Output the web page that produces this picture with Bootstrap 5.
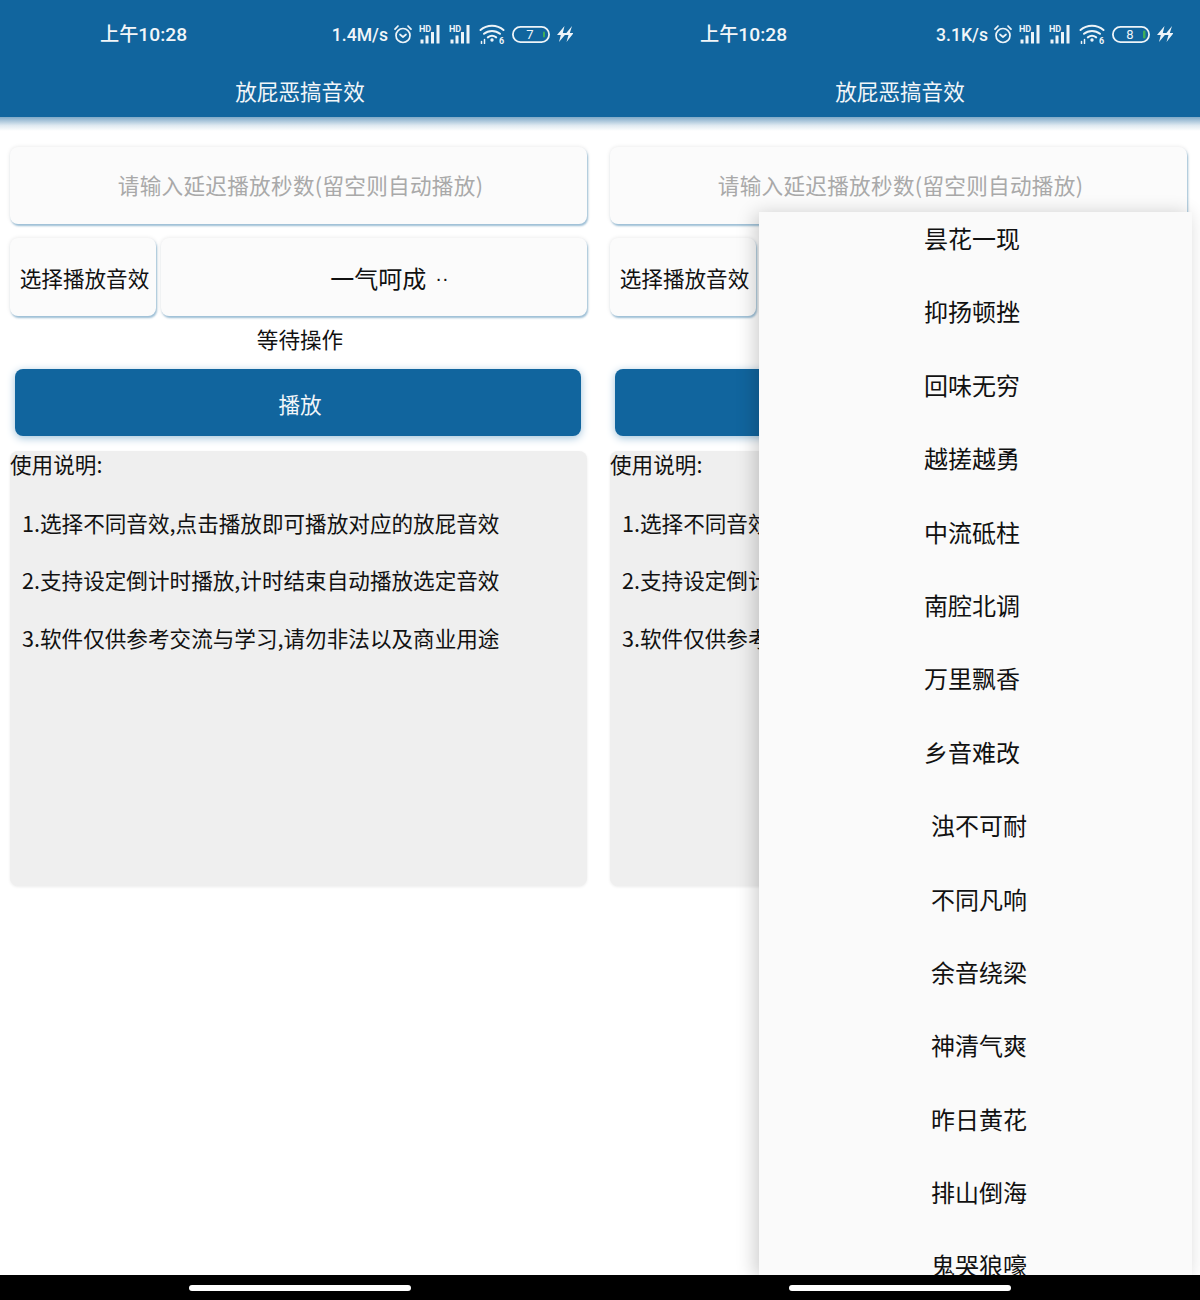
<!DOCTYPE html>
<html lang="zh-CN">
<head>
<meta charset="utf-8">
<title>放屁恶搞音效</title>
<link href="https://cdn.jsdelivr.net/npm/bootstrap@5.3.0/dist/css/bootstrap.min.css" rel="stylesheet">
<style>
html,body{margin:0;height:1300px;overflow:hidden;background:#fff}
body{font-family:"Noto Sans CJK SC","Liberation Sans",sans-serif;color:#111}
.screen{width:600px;height:1300px;position:relative;overflow:hidden;flex:none}
.app-head{height:117px;background:#11659e;color:#f2f6f9}
.status-row{height:28px;margin-top:20px;padding:0 27px 0 100px}
.clock{font:500 19.2px/30px Roboto,"Noto Sans CJK SC",sans-serif;padding-top:2px}
.speed{font:500 17.6px/30px Roboto,sans-serif;margin-right:-1px;padding-top:1px}
.tray{gap:7px}
.tray svg{display:block;flex:none}
.app-title{font-size:21.6px;line-height:30px;margin-top:28px;text-align:center}
.head-fade{height:14px;background:linear-gradient(#7fa9c8,#dfe9f1 60%,#fff)}
.body-pad{padding:0 13px 0 10px}
.delay-input.form-control{display:block;height:77px;margin-top:16px;width:577px;border:0;border-radius:8px;background:#fbfbfb;box-shadow:1px 2px 2px #9dbfd6,0 0 4px #e6e6e6;text-align:center;font-size:21.6px;letter-spacing:.3px;color:#333;padding:0 0 2px 4px}
.delay-input::placeholder{color:#a9a9a9;opacity:1}
.pick-row{margin-top:14px;height:78px;gap:5px}
.pick-box{background:#fbfbfb;border-radius:8px;box-shadow:1px 2px 2px #9dbfd6,0 0 4px #e6e6e6;font-size:21.6px;color:#111;height:78px}
.pick-label{width:146px;justify-content:center;padding:2px 0 0 3px}
.pick-value{width:426px;justify-content:center;font-size:24px;padding:2px 0 0 31px}
.more-dots{font:20px/1 "Liberation Sans",sans-serif;margin-left:9px}
.wait-text{font-size:21.6px;line-height:30px;text-align:center;margin-top:8px;padding-left:3px}
.play-btn.btn{display:block;width:566px;height:67px;margin:15px 0 0 5px;padding:4px 0 0 4px;background:#11659e;border:0;border-radius:8px;color:#f2f6f9;font-size:21.6px;box-shadow:0 2px 8px #9fc2da}
.help-box{height:435px;margin-top:15px;width:577px;background:#efefef;border-radius:8px;box-shadow:0 1px 3px #ececec;font-size:21.6px;line-height:30px;color:#111}
.help-head{line-height:26px;padding-bottom:3px}
.help-line{padding-left:12px;margin-top:27.6px}
.sound-menu{position:absolute;left:159px;top:212px;width:433px;height:1063px;background:#fafafa;box-shadow:-4px 2px 18px rgba(0,0,0,.2);overflow:hidden}
.sound-list{margin:-11px 0 0;padding:0 7px 0 0}
.sound-item{height:73.4px;line-height:73.4px;text-align:center;font-size:24px;color:#111;list-style:none}
.sound-item.shifted{padding-left:14px}
.nav-strip{position:absolute;left:0;right:0;bottom:0;height:25px;background:#000}
.nav-pill{width:222px;height:6px;border-radius:3px;background:#fff;margin:10px auto 0}
</style>
</head>
<body>
<svg width="0" height="0" style="position:absolute">
<defs>
<symbol id="i-alarm" viewBox="0 0 18 20"><g fill="none" stroke="#eef4f8" stroke-width="1.700" stroke-linecap="round" stroke-linejoin="round"><circle cx="9" cy="11.500" r="7"/><path d="M6 10.500l3 2.500 3-2.500"/><path d="M1 5.200L4 2M17 5.200L14 2"/></g></symbol>
<symbol id="i-signal" viewBox="0 0 23 20"><text x="0" y="7.500" font-family="Roboto,sans-serif" font-size="9" font-weight="700" fill="#eef4f8">HD</text><g fill="#eef4f8"><rect x="1.500" y="15.500" width="3" height="4"/><rect x="6.500" y="11.500" width="3" height="8"/><rect x="12" y="8" width="3" height="11.500"/><rect x="17.500" y="1" width="3" height="18.500"/></g></symbol>
<symbol id="i-wifi" viewBox="0 0 26 20"><g fill="none" stroke="#eef4f8" stroke-width="2" stroke-linecap="round"><path d="M1.500 6C8 .3 18 .3 24.500 6"/><path d="M5 9.800c4.500-3.800 11.500-3.800 16 0"/><path d="M8.800 13.400c2.500-1.900 5.900-1.900 8.400 0"/></g><circle cx="13" cy="16" r="1.700" fill="#eef4f8"/><path d="M2.500 19.500v-2M5.500 19.500v-4" stroke="#eef4f8" stroke-width="1.500" stroke-linecap="round"/><text x="20" y="20" font-family="Roboto,sans-serif" font-size="9" font-weight="700" fill="#eef4f8">6</text></symbol>
<symbol id="i-bolt" viewBox="0 0 16 16"><path d="M7.500 0L0 9h3.800L2 16l7.500-9H5.800zM15 0L7.800 9h3.700L9.500 16 16.500 7h-3.700z" fill="#eef4f8"/></symbol>
</defs>
</svg>
<main class="d-flex">

<section class="screen">
  <header class="app-head d-flex flex-column">
    <div class="status-row d-flex justify-content-between align-items-center">
      <span class="clock">上午10:28</span>
      <div class="tray d-flex align-items-center">
        <span class="speed">1.4M/s</span>
        <svg width="18" height="20"><use href="#i-alarm"/></svg>
        <svg width="23" height="20"><use href="#i-signal"/></svg>
        <svg width="23" height="20"><use href="#i-signal"/></svg>
        <svg width="26" height="20"><use href="#i-wifi"/></svg>
        <svg width="38" height="17" viewBox="0 0 38 17"><rect x=".9" y=".9" width="36.200" height="15.200" rx="7.600" fill="none" stroke="#eef4f8" stroke-width="1.800"/><rect x="31" y="5.500" width="2" height="6" rx="1" fill="#3fae5a"/><text x="18" y="13" text-anchor="middle" font-family="Roboto,sans-serif" font-size="13" fill="#eef4f8">7</text></svg>
        <svg width="16" height="16"><use href="#i-bolt"/></svg>
      </div>
    </div>
    <div class="app-title">放屁恶搞音效</div>
  </header>
  <div class="head-fade"></div>
  <div class="body-pad">
    <input class="delay-input form-control" type="text" placeholder="请输入延迟播放秒数(留空则自动播放)">
    <div class="pick-row d-flex">
      <div class="pick-box pick-label d-flex align-items-center">选择播放音效</div>
      <div class="pick-box pick-value d-flex align-items-center">一气呵成<span class="more-dots">··</span></div>
    </div>
    <div class="wait-text">等待操作</div>
    <button class="play-btn btn" type="button">播放</button>
    <div class="help-box">
      <div class="help-head">使用说明:</div>
      <div class="help-line">1.选择不同音效,点击播放即可播放对应的放屁音效</div>
      <div class="help-line">2.支持设定倒计时播放,计时结束自动播放选定音效</div>
      <div class="help-line">3.软件仅供参考交流与学习,请勿非法以及商业用途</div>
    </div>
  </div>
  <div class="nav-strip"><div class="nav-pill"></div></div>
</section>

<section class="screen">
  <header class="app-head d-flex flex-column">
    <div class="status-row d-flex justify-content-between align-items-center">
      <span class="clock">上午10:28</span>
      <div class="tray d-flex align-items-center">
        <span class="speed">3.1K/s</span>
        <svg width="18" height="20"><use href="#i-alarm"/></svg>
        <svg width="23" height="20"><use href="#i-signal"/></svg>
        <svg width="23" height="20"><use href="#i-signal"/></svg>
        <svg width="26" height="20"><use href="#i-wifi"/></svg>
        <svg width="38" height="17" viewBox="0 0 38 17"><rect x=".9" y=".9" width="36.200" height="15.200" rx="7.600" fill="none" stroke="#eef4f8" stroke-width="1.800"/><rect x="31" y="4.500" width="2.500" height="8" rx="1" fill="#3fae5a"/><text x="18" y="13" text-anchor="middle" font-family="Roboto,sans-serif" font-size="13" fill="#eef4f8">8</text></svg>
        <svg width="16" height="16"><use href="#i-bolt"/></svg>
      </div>
    </div>
    <div class="app-title">放屁恶搞音效</div>
  </header>
  <div class="head-fade"></div>
  <div class="body-pad">
    <input class="delay-input form-control" type="text" placeholder="请输入延迟播放秒数(留空则自动播放)">
    <div class="pick-row d-flex">
      <div class="pick-box pick-label d-flex align-items-center">选择播放音效</div>
      <div class="pick-box pick-value d-flex align-items-center">一气呵成<span class="more-dots">··</span></div>
    </div>
    <div class="wait-text">等待操作</div>
    <button class="play-btn btn" type="button">播放</button>
    <div class="help-box">
      <div class="help-head">使用说明:</div>
      <div class="help-line">1.选择不同音效,点击播放即可播放对应的放屁音效</div>
      <div class="help-line">2.支持设定倒计时播放,计时结束自动播放选定音效</div>
      <div class="help-line">3.软件仅供参考交流与学习,请勿非法以及商业用途</div>
    </div>
  </div>
  <div class="sound-menu">
    <ul class="sound-list">
      <li class="sound-item">昙花一现</li>
      <li class="sound-item">抑扬顿挫</li>
      <li class="sound-item">回味无穷</li>
      <li class="sound-item">越搓越勇</li>
      <li class="sound-item">中流砥柱</li>
      <li class="sound-item">南腔北调</li>
      <li class="sound-item">万里飘香</li>
      <li class="sound-item">乡音难改</li>
      <li class="sound-item shifted">浊不可耐</li>
      <li class="sound-item shifted">不同凡响</li>
      <li class="sound-item shifted">余音绕梁</li>
      <li class="sound-item shifted">神清气爽</li>
      <li class="sound-item shifted">昨日黄花</li>
      <li class="sound-item shifted">排山倒海</li>
      <li class="sound-item shifted">鬼哭狼嚎</li>
    </ul>
  </div>
  <div class="nav-strip"><div class="nav-pill"></div></div>
</section>

</main>
<script src="https://cdn.jsdelivr.net/npm/bootstrap@5.3.0/dist/js/bootstrap.bundle.min.js"></script>
</body>
</html>
